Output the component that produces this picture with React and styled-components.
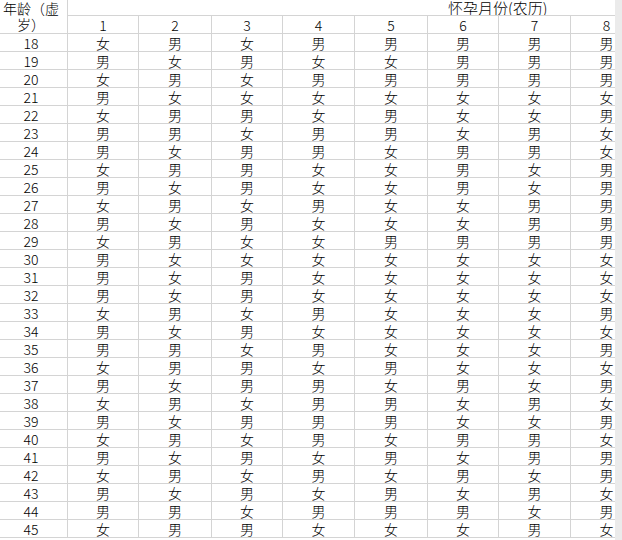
import React from 'react';
import styled, { createGlobalStyle } from 'styled-components';

const GlobalStyle = createGlobalStyle`
  html, body {
    margin: 0;
    padding: 0;
    background: #fff;
  }
  body {
    width: 622px;
    height: 540px;
    overflow: hidden;
    font-family: "Noto Sans CJK SC", "Noto Sans", sans-serif;
    font-weight: 300;
    color: #000;
  }
`;

const Page = styled.div`
  display: flex;
  width: 622px;
  height: 540px;
`;

const Sheet = styled.div`
  flex: 1;
  overflow: hidden;
  background: #fff;
`;

const ScrollStrip = styled.div`
  width: 7px;
  background: #ebebeb;
`;

// first column holds the age, then one column per lunar month
const Grid = styled.div`
  display: grid;
  grid-template-columns: 68px 71px 73px 71px 72px 73px 71px 72px 72px;
  grid-template-rows: 16px;
  grid-auto-rows: 18px;
  width: 643px;
`;

const Cell = styled.div`
  box-sizing: border-box;
  border-right: 1px solid #d4d4d4;
  border-bottom: 1px solid #d4d4d4;
  font-size: 14px;
  line-height: 15px;
  padding-top: 2px;
  padding-right: ${({ $first }) => ($first ? '5px' : '0')};
  text-align: center;
  white-space: nowrap;
  overflow: hidden;
`;

const AgeHeader = styled(Cell)`
  grid-row: span 2;
  line-height: 16px;
  padding-top: 0;
`;

const TitleCell = styled.div`
  grid-column: 2 / -1;
  box-sizing: border-box;
  border-bottom: 1px solid #d4d4d4;
  font-size: 15px;
  line-height: 15px;
  padding-left: 380px;
  white-space: nowrap;
  overflow: hidden;
`;

const rows = [
  [18, '女男女男男男男男'],
  [19, '男女男女女男男男'],
  [20, '女男女男男男男男'],
  [21, '男女女女女女女女'],
  [22, '女男男女男女女男'],
  [23, '男男女男男女男女'],
  [24, '男女男男女男男女'],
  [25, '女男男女女男女男'],
  [26, '男女男女女男女男'],
  [27, '女男女男女女男男'],
  [28, '男女男女女女男男'],
  [29, '女男女女男男男男'],
  [30, '男女女女女女女女'],
  [31, '男女男女女女女女'],
  [32, '男女男女女女女女'],
  [33, '女男女男女女女男'],
  [34, '男女男女女女女女'],
  [35, '男男女男女女女男'],
  [36, '女男男女男女女女'],
  [37, '男女男男女男女男'],
  [38, '女男女男男女男女'],
  [39, '男女男男男女女男'],
  [40, '女男女男女男男女'],
  [41, '男女男女男女男男'],
  [42, '女男女男女男女男'],
  [43, '男女男女男女男女'],
  [44, '男男女男男男女男'],
  [45, '女男男女女女男女'],
];

const months = [1, 2, 3, 4, 5, 6, 7, 8];

const App = () => (
  <>
    <GlobalStyle />
    <Page>
      <Sheet>
        <Grid>
          <AgeHeader $first>
            年龄（虚
            <br />
            岁）
          </AgeHeader>
          <TitleCell>怀孕月份(农历)</TitleCell>
          {months.map((m) => (
            <Cell key={m}>{m}</Cell>
          ))}
          {rows.map(([age, line]) => (
            <React.Fragment key={age}>
              <Cell $first>{age}</Cell>
              {line.split('').map((s, i) => (
                <Cell key={i}>{s}</Cell>
              ))}
            </React.Fragment>
          ))}
        </Grid>
      </Sheet>
      <ScrollStrip />
    </Page>
  </>
);

export default App;
